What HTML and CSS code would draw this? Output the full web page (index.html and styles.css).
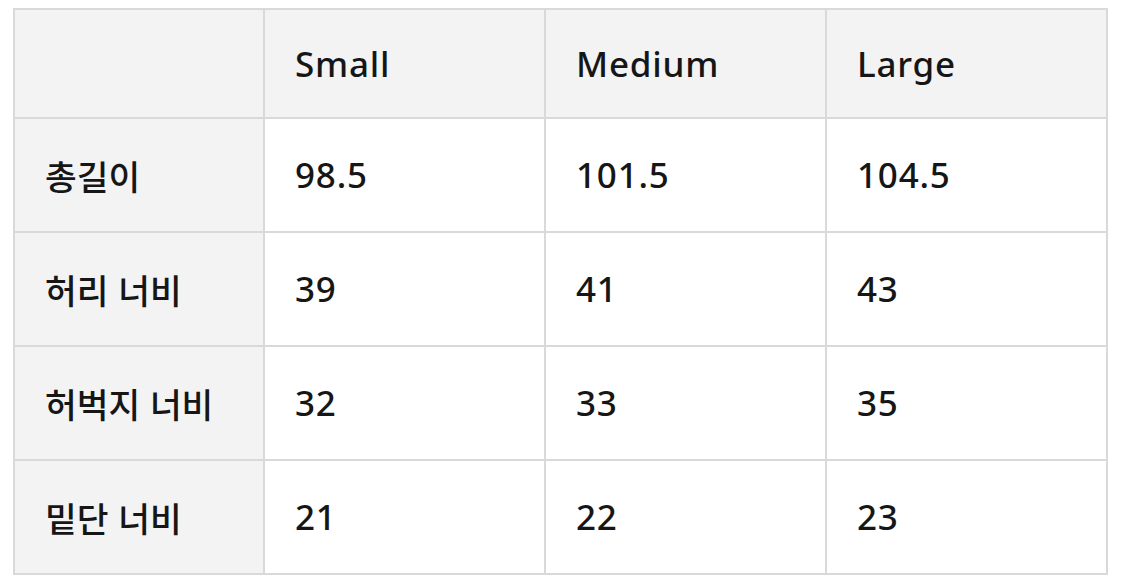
FILE: index.html
```html
<!DOCTYPE html>
<html lang="ko">
<head>
<meta charset="utf-8">
<link rel="stylesheet" href="styles.css">
</head>
<body>
<table class="size-table">
  <colgroup>
    <col class="c-label">
    <col class="c-size">
    <col class="c-size">
    <col class="c-size">
  </colgroup>
  <thead>
    <tr class="head-row">
      <th class="label"></th>
      <th>Small</th>
      <th>Medium</th>
      <th>Large</th>
    </tr>
  </thead>
  <tbody>
    <tr><th class="label">총길이</th><td>98.5</td><td>101.5</td><td>104.5</td></tr>
    <tr><th class="label">허리 너비</th><td>39</td><td>41</td><td>43</td></tr>
    <tr><th class="label">허벅지 너비</th><td>32</td><td>33</td><td>35</td></tr>
    <tr><th class="label">밑단 너비</th><td>21</td><td>22</td><td>23</td></tr>
  </tbody>
</table>
</body>
</html>
```

FILE: styles.css
```css
html, body {
  margin: 0;
  padding: 0;
  background: #ffffff;
}
body {
  padding: 8px 0 0 13px;
  font-family: "Noto Sans", "Noto Sans CJK KR", sans-serif;
  color: #161616;
}
.size-table {
  border-collapse: collapse;
  table-layout: fixed;
  width: 1095px;
}
.c-label { width: 250px; }
.c-size { width: 281px; }
.size-table th,
.size-table td {
  border: 2px solid #d9d9d9;
  text-align: left;
  padding: 0 0 0 30px;
  font-weight: 500;
  font-size: 35px;
  line-height: 48px;
  letter-spacing: 0.8px;
  height: 112px;
  vertical-align: middle;
}
.head-row th {
  background: #f3f3f3;
  height: 107px;
}
.size-table th.label {
  background: #f3f3f3;
  font-family: "Noto Sans CJK KR", sans-serif;
  font-weight: 500;
  font-size: 34.5px;
  letter-spacing: 0;
}
.size-table td {
  background: #ffffff;
}
```
